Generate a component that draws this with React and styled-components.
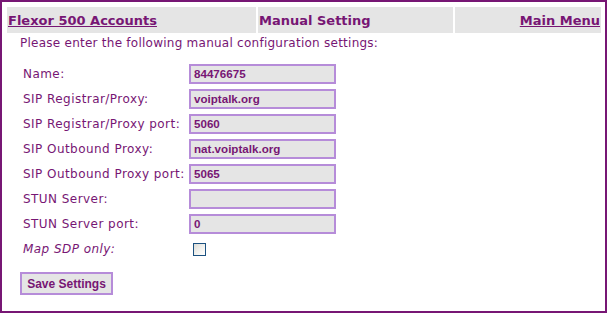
import styled, { createGlobalStyle } from 'styled-components'

const purple = '#771674'
const lilac = '#b68cd9'
const grey = '#e5e5e5'

const GlobalStyle = createGlobalStyle`
  body {
    margin: 0;
    background: #fff;
    font-family: "DejaVu Sans", Verdana, sans-serif;
    color: ${purple};
  }
`

const fields = [
  { label: 'Name:', value: '84476675' },
  { label: 'SIP Registrar/Proxy:', value: 'voiptalk.org' },
  { label: 'SIP Registrar/Proxy port:', value: '5060' },
  { label: 'SIP Outbound Proxy:', value: 'nat.voiptalk.org' },
  { label: 'SIP Outbound Proxy port:', value: '5065' },
  { label: 'STUN Server:', value: '' },
  { label: 'STUN Server port:', value: '0' },
]

function App() {
  return (
    <>
      <GlobalStyle />
      <Frame>
        <Header>
          <HeadCell><HeadLink href="#">Flexor 500 Accounts</HeadLink></HeadCell>
          <HeadCell>Manual Setting</HeadCell>
          <HeadCell align="right"><HeadLink href="#">Main Menu</HeadLink></HeadCell>
        </Header>
        <Intro>Please enter the following manual configuration settings:</Intro>
        <Form>
          {fields.map((f) => (
            <Row key={f.label}>
              <Label>{f.label}</Label>
              <Field>{f.value}</Field>
            </Row>
          ))}
          <Row>
            <Label italic>Map SDP only:</Label>
            <Check />
          </Row>
        </Form>
        <SaveButton>Save Settings</SaveButton>
      </Frame>
    </>
  )
}

const Frame = styled.div`
  box-sizing: border-box;
  width: 607px;
  height: 313px;
  border: 2px solid ${purple};
  padding: 5px 4px 0 5px;
`

const Header = styled.div`
  display: grid;
  grid-template-columns: 249px 195px 146px;
  column-gap: 2px;
`

const HeadCell = styled.div`
  height: 26px;
  background: ${grey};
  font-size: 13px;
  font-weight: bold;
  line-height: 28px;
  padding: 0 1px;
  text-align: ${props => props.align || 'left'};
  white-space: nowrap;
`

const HeadLink = styled.a`
  color: ${purple};
  text-decoration: underline;
`

const Intro = styled.p`
  margin: 0;
  padding: 3px 0 0 13px;
  font-size: 12px;
  line-height: 15px;
  letter-spacing: 0.25px;
`

const Form = styled.div`
  display: flex;
  flex-direction: column;
  gap: 5px;
  padding: 13px 0 0 16px;
`

const Row = styled.div`
  display: grid;
  grid-template-columns: 166px 147px;
  align-items: center;
  min-height: 20px;
`

const Label = styled.span`
  font-size: 12px;
  letter-spacing: 0.45px;
  font-style: ${props => props.italic ? 'italic' : 'normal'};
  white-space: nowrap;
`

const Field = styled.div`
  box-sizing: border-box;
  height: 20px;
  border: 2px solid ${lilac};
  background: ${grey};
  font-family: "Liberation Sans", Tahoma, sans-serif;
  font-size: 11.6px;
  font-weight: bold;
  line-height: 16px;
  padding: 0 3px;
`

const Check = styled.span`
  box-sizing: border-box;
  width: 13px;
  height: 13px;
  margin-left: 4px;
  border: 1px solid #1c5180;
  background: linear-gradient(135deg, #dcdcd7 0%, #f4f4f1 60%, #ffffff 100%);
`

const SaveButton = styled.button`
  display: block;
  box-sizing: border-box;
  margin: 13px 0 0 13px;
  width: 93px;
  height: 23px;
  border: 2px solid ${lilac};
  background: ${grey};
  color: ${purple};
  font-family: "Liberation Sans", Tahoma, sans-serif;
  font-size: 12px;
  font-weight: bold;
  white-space: nowrap;
  padding: 0;
`

export default App
